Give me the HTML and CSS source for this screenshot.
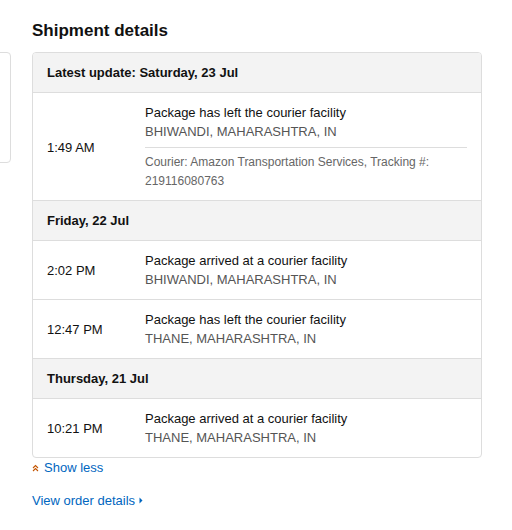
FILE: index.html
```html
<!DOCTYPE html>
<html>
<head>
<meta charset="utf-8">
<link rel="stylesheet" href="styles.css">
</head>
<body>
<div class="page">
  <div class="side"><div class="side-box"></div></div>
  <div class="main">
    <h2 class="title">Shipment details</h2>
    <div class="card">
      <div class="day">Latest update: Saturday, 23 Jul</div>
      <div class="row first">
        <div class="time">1:49 AM</div>
        <div class="event">
          <div class="msg">Package has left the courier facility</div>
          <div class="loc">BHIWANDI, MAHARASHTRA, IN</div>
          <div class="courier">Courier: Amazon Transportation Services, Tracking #: 219116080763</div>
        </div>
      </div>
      <div class="day">Friday, 22 Jul</div>
      <div class="row">
        <div class="time">2:02 PM</div>
        <div class="event">
          <div class="msg">Package arrived at a courier facility</div>
          <div class="loc">BHIWANDI, MAHARASHTRA, IN</div>
        </div>
      </div>
      <div class="row">
        <div class="time">12:47 PM</div>
        <div class="event">
          <div class="msg">Package has left the courier facility</div>
          <div class="loc">THANE, MAHARASHTRA, IN</div>
        </div>
      </div>
      <div class="day">Thursday, 21 Jul</div>
      <div class="row last">
        <div class="time">10:21 PM</div>
        <div class="event">
          <div class="msg">Package arrived at a courier facility</div>
          <div class="loc">THANE, MAHARASHTRA, IN</div>
        </div>
      </div>
    </div>
    <a class="link show-less" href="#"><svg class="chev" width="7" height="8" viewBox="0 0 7 8"><path d="M1 4 L3.5 1.5 L6 4 M1 7 L3.5 4.5 L6 7" fill="none" stroke="#c45500" stroke-width="1.1"/></svg>Show less</a>
    <a class="link view" href="#">View order details<svg class="caret" width="4" height="7" viewBox="0 0 4 7"><path d="M0.5 0.5 L3.5 3.5 L0.5 6.5 Z" fill="#0066c0"/></svg></a>
  </div>
</div>
</body>
</html>
```
FILE: styles.css
```css
html, body {
  margin: 0;
  padding: 0;
  background: #fff;
}
body {
  font-family: "Liberation Sans", Arial, sans-serif;
  font-size: 13px;
  line-height: 19px;
  color: #111;
}
.page {
  display: flex;
  gap: 20px;
  width: 512px;
}
.side {
  width: 12px;
  flex: none;
  overflow: hidden;
}
.side-box {
  margin-top: 52px;
  margin-left: -20px;
  width: 29px;
  height: 109px;
  border: 1px solid #ddd;
  border-radius: 4px;
}
.main {
  width: 450px;
  flex: none;
}
.title {
  margin: 20px 0 10px;
  font-size: 17px;
  line-height: 22px;
  font-weight: bold;
}
.card {
  border: 1px solid #ddd;
  border-radius: 4px;
  overflow: hidden;
}
.day {
  background: #f3f3f3;
  font-weight: bold;
  padding: 10px 14px 10px 14px;
  border-bottom: 1px solid #ddd;
}
.row {
  display: flex;
  align-items: center;
  padding: 10px 14px 10px 14px;
  border-bottom: 1px solid #ddd;
}
.row.first {
  padding-bottom: 9px;
}
.row.last {
  border-bottom: none;
}
.time {
  width: 98px;
  flex: none;
}
.event {
  flex: 1;
}
.loc {
  color: #555;
}
.courier {
  color: #666;
  font-size: 12px;
  line-height: 19px;
  margin-top: 6px;
  padding-top: 5px;
  border-top: 1px solid #ddd;
}
.link {
  display: flex;
  align-items: center;
  color: #0066c0;
  text-decoration: none;
}
.show-less {
  gap: 5px;
}
.view {
  margin-top: 14px;
  gap: 4px;
}
.chev, .caret {
  flex: none;
}
```
